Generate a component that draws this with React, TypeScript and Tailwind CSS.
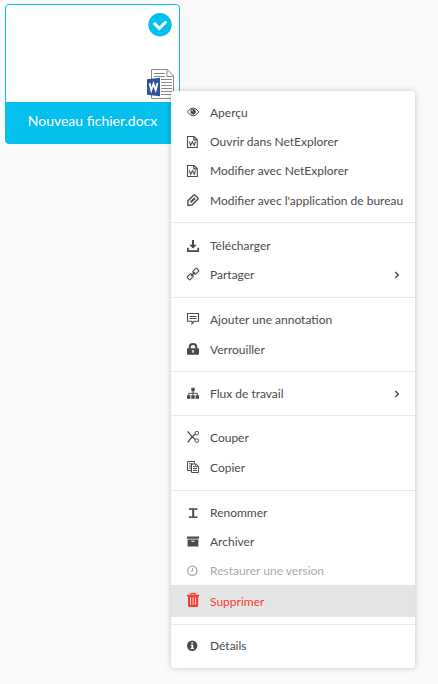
// File tile with its contextual menu opened.
import type { ReactNode } from "react";

type Item = {
  label: string;
  icon: ReactNode;
  submenu?: boolean;
  disabled?: boolean;
  danger?: boolean;
};

type Group = {
  className: string;
  items: Item[];
};

function Icon({ children }: { children: ReactNode }) {
  return (
    <svg
      viewBox="0 0 14 14"
      width="14"
      height="14"
      fill="none"
      stroke="currentColor"
      strokeWidth="1"
      className="shrink-0 overflow-visible"
    >
      {children}
    </svg>
  );
}

const eye = (
  <Icon>
    <path d="M.4 5.9Q3 2 6.1 2T11.8 5.9Q9.2 9.9 6.1 9.9T.4 5.9Z" />
    <circle cx="6.1" cy="5.7" r="2.7" fill="currentColor" stroke="none" />
    <path d="M4.9 5.6q.1-1.2 1.3-1.3" stroke="#fff" strokeWidth=".8" />
  </Icon>
);

const wordFile = (
  <Icon>
    <path d="M.5 1.5h6.5l3.3 3.3v7.7H.5zM6.8 1.7v3.2h3.4" strokeWidth="1.1" />
    <path d="M2.3 6.4l1.3 4 1.8-3.6 1.8 3.6 1.3-4" strokeWidth="1.1" />
  </Icon>
);

const pen = (
  <Icon>
    <path
      d="M.9 11.3V6.9L6.6 1.3q.8-.8 1.6 0l2.6 2.4q.8.8 0 1.6L5 11.1z"
      strokeWidth="1.4"
    />
    <path d="M3.6 8.3L8.1 4" strokeWidth="2" />
  </Icon>
);

const download = (
  <Icon>
    <path d="M.9 8.7v3.4h10.3V8.7" strokeWidth="1.8" />
    <path
      d="M5 1h2v4.7h2.8L6 9.6 2.2 5.7H5z"
      fill="currentColor"
      stroke="none"
    />
  </Icon>
);

const link = (
  <Icon>
    <g transform="rotate(-45 6 6)" strokeWidth="1.1">
      <rect x="-.6" y="4" width="5.4" height="4" rx=".6" />
      <rect x="7.2" y="4" width="5.4" height="4" rx=".6" />
      <path d="M3.2 6h5.6" strokeWidth="1.4" />
    </g>
  </Icon>
);

const comment = (
  <Icon>
    <path d="M.5.5h11v7.8H7.2L5 10.8V8.3H.5z" strokeWidth="1.1" />
    <path d="M2.5 3.5h7M2.5 5.5h7" />
  </Icon>
);

const lock = (
  <Icon>
    <path d="M2.7 6V4.2Q2.7 1 6 1t3.3 3.2V6" strokeWidth="1.9" />
    <path
      fillRule="evenodd"
      d="M.8 5.3h10.4q.8 0 .8.8v4.8q0 .8-.8.8H.8q-.8 0-.8-.8V6.1q0-.8.8-.8zM5.3 7v2.8h1.4V7z"
      fill="currentColor"
      stroke="none"
    />
  </Icon>
);

const sitemap = (
  <Icon>
    <path
      d="M4.3.8h3.4v3.4H4.3zM0 8.3h3.4v3.5H0zM4.3 8.3h3.4v3.5H4.3zM8.6 8.3H12v3.5H8.6z"
      fill="currentColor"
      stroke="none"
    />
    <path d="M6 4v5M1.7 9V6.3h8.6V9" />
  </Icon>
);

const cut = (
  <Icon>
    <circle cx="9.8" cy="2.1" r="1.8" />
    <circle cx="9.8" cy="9.6" r="1.8" />
    <path d="M.7.3L4.8 5.6 8.3 8.6M.7 11.4L4.8 6 8.3 3.2" strokeWidth="1.3" />
  </Icon>
);

const copy = (
  <Icon>
    <path d="M4 9.5H.5V.5h7v2M2 2.8h3.5M2 5h2M2 7.2h2" />
    <path d="M4.5 3h4.6l2.4 2.4v6.1h-7zM8.8 3.2v2.5h2.5M6 5.6h2M6 7.6h4M6 9.5h4" />
  </Icon>
);

const rename = (
  <Icon>
    <path d="M2.8 4V2.9h6.8V4M2.8 10.3v1h6.8v-1" strokeWidth="1.5" />
    <path d="M6.2 3v8" strokeWidth="2" />
  </Icon>
);

const archive = (
  <Icon>
    <path
      fillRule="evenodd"
      d="M0 1.4h12v2.4H0zM.6 4.6h10.8v7H.6zM4.4 5.7v1.1h3.2V5.7z"
      fill="currentColor"
      stroke="none"
    />
  </Icon>
);

const clock = (
  <Icon>
    <circle cx="5.3" cy="6.7" r="4.6" strokeWidth="1.4" />
    <path d="M5.5 3.9v3.3H3.3" />
  </Icon>
);

const trash = (
  <Icon>
    <path d="M3.6.7Q4-.5 5-.5h2.2q1 0 1.4 1.2" strokeWidth="1.3" />
    <path
      fillRule="evenodd"
      d="M0 .7h12.2v1.7h-1v9.2q0 1.4-1.3 1.4H2.3Q1 13 1 11.6V2.4H0zM3.1 3.2v7.6h1V3.2zM5.6 3.2v7.6h1V3.2zM8.1 3.2v7.6h1V3.2z"
      fill="currentColor"
      stroke="none"
    />
  </Icon>
);

const info = (
  <Icon>
    <circle cx="5.2" cy="6.7" r="5.2" fill="currentColor" stroke="none" />
    <path
      d="M4.4 3.2h1.7v1.4H4.4zM3.8 5.6h2.4v3.5h.7v1H3.6v-1h.8V6.5h-.6z"
      fill="#fff"
      stroke="none"
    />
  </Icon>
);

const groups: Group[] = [
  {
    className: "h-[131px] pt-[7px]",
    items: [
      { label: "Aperçu", icon: eye },
      { label: "Ouvrir dans NetExplorer", icon: wordFile },
      { label: "Modifier avec NetExplorer", icon: wordFile },
      { label: "Modifier avec l'application de bureau", icon: pen },
    ],
  },
  {
    className: "h-[75px] pt-[8px] border-t",
    items: [
      { label: "Télécharger", icon: download },
      { label: "Partager", icon: link, submenu: true },
    ],
  },
  {
    className: "h-[74px] pt-[7px] border-t [&_li+li]:mt-px",
    items: [
      { label: "Ajouter une annotation", icon: comment },
      { label: "Verrouiller", icon: lock },
    ],
  },
  {
    className: "h-[44px] pt-[7px] border-t",
    items: [{ label: "Flux de travail", icon: sitemap, submenu: true }],
  },
  {
    className: "h-[75px] pt-[7px] border-t [&_li+li]:mt-px",
    items: [
      { label: "Couper", icon: cut },
      { label: "Copier", icon: copy },
    ],
  },
  {
    className: "h-[134px] pt-[7px] border-t",
    items: [
      { label: "Renommer", icon: rename },
      { label: "Archiver", icon: archive },
      { label: "Restaurer une version", icon: clock, disabled: true },
      { label: "Supprimer", icon: trash, danger: true },
    ],
  },
  {
    className: "h-[44px] pt-[6px] border-t",
    items: [{ label: "Détails", icon: info }],
  },
];

function MenuItem({ item }: { item: Item }) {
  let tone = "h-[29.33px] text-[#4b4b4b]";
  if (item.disabled) tone = "h-[29.33px] text-[#aaaaaa]";
  if (item.danger) tone = "-mt-px h-8 bg-[#e5e5e5] text-[#ff3b30]";

  return (
    <li className={`flex items-center pr-4 pl-4 ${tone}`}>
      {item.icon}
      <span
        className={`ml-[9px] grow whitespace-nowrap ${item.danger ? "pt-0.5" : ""}`}
      >
        {item.label}
      </span>
      {item.submenu && (
        <svg
          viewBox="0 0 5 8"
          width="5"
          height="8"
          fill="none"
          stroke="#3d3d5c"
          strokeWidth="1.2"
        >
          <path d="M1.3 1l3 3-3 3" />
        </svg>
      )}
    </li>
  );
}

function WordIcon() {
  return (
    <svg viewBox="0 0 28 31" width="28" height="31" fill="none">
      <path d="M4.5.5h16l6 6.5v22.5h-22z" fill="#fff" stroke="#8a8a8a" />
      <path d="M20 .8v6.7h6.5" stroke="#8a8a8a" />
      <path
        d="M7 4.5h11M7 7.5h11M14 10.5h11M14 13.5h11M14 16.5h11M14 19.5h11M14 22.5h11M14 25.5h11"
        stroke="#8a8a8a"
      />
      <path d="M0 10.2L13 8.7v18.5L0 25.8z" fill="#2b579a" />
      <path
        d="M2.6 14.2l1.7 7 2.2-6.4 2.2 6.4 1.8-7.2"
        stroke="#fff"
        strokeWidth="1.8"
      />
    </svg>
  );
}

export default function App() {
  return (
    <main className="relative h-[684px] w-[438px] overflow-hidden bg-[#fafafa] pt-1 pl-[5px] font-['Lato',sans-serif]">
      <div className="flex h-[140px] w-[175px] flex-col overflow-hidden rounded border border-[#05c0ec] bg-[#05c0ec]">
        <div className="flex h-[97px] flex-col items-end justify-between bg-white pt-2">
          <svg viewBox="0 0 24 24" width="24" height="24" className="mr-[7.5px]">
            <circle cx="12" cy="11.7" r="11.7" fill="#05c0ec" />
            <path
              d="M5.8 9.9l5.5 5.4 7-6.8"
              fill="none"
              stroke="#fff"
              strokeWidth="3"
            />
          </svg>
          <div className="mr-[4px] h-[33px]">
            <WordIcon />
          </div>
        </div>
        <p className="pt-[9px] text-center text-[14px] leading-5 text-white">
          Nouveau fichier.docx
        </p>
      </div>

      <ul className="absolute top-[91px] left-[171px] h-[577px] w-[244px] rounded bg-white text-[12px] shadow-[0_0_6px_rgba(0,0,0,0.22)]">
        {groups.map((group, index) => (
          <li key={index} className={`border-[#e8e8e8] ${group.className}`}>
            <ul>
              {group.items.map((item) => (
                <MenuItem key={item.label} item={item} />
              ))}
            </ul>
          </li>
        ))}
      </ul>
    </main>
  );
}
